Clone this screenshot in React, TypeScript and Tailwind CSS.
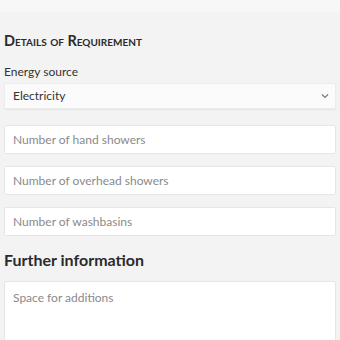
import React from "react";

// Numeric field list
const NumberFields = [
  "Number of hand showers",
  "Number of overhead showers",
  "Number of washbasins",
];

const inputClass =
  "block w-full h-[29px] px-2 bg-white border border-[#e6e6e6] rounded-[2px] text-[12px] text-[#333] placeholder:text-[#8a8a8a] outline-none";

const App = () => {
  return (
    <div className="w-[340px] h-[340px] overflow-hidden bg-[#f3f3f3] font-['Lato',sans-serif] text-[#333]">
      <div className="h-3 bg-[#f7f7f7]" />
      <div className="px-1 pt-[21px]">
        <h2 className="text-[14.5px] font-bold [font-variant:small-caps] leading-4 text-[#2b2b2b]">
          Details of Requirement
        </h2>
        <label className="block mt-[15px] text-[12px] leading-4 text-[#333]">
          Energy source
        </label>
        <div className="relative mt-[3px]">
          <select className="block w-full h-[26px] pl-2 pr-6 bg-[#fbfbfb] border border-[#ececec] rounded-[2px] shadow-[0_1px_1px_rgba(0,0,0,0.06)] text-[12px] text-[#333] appearance-none outline-none">
            <option>Electricity</option>
          </select>
          <svg
            className="absolute right-[7px] top-[10px] pointer-events-none"
            width="8"
            height="6"
            viewBox="0 0 8 6"
            fill="none"
          >
            <path d="M1 1.5L4 4.5L7 1.5" stroke="#777" strokeWidth="1.2" />
          </svg>
        </div>
        <div className="flex flex-col gap-[12px] mt-[16px]">
          {NumberFields.map((name, idx) => (
            <input key={idx} type="number" placeholder={name} className={inputClass} />
          ))}
        </div>
        <h3 className="mt-[14px] text-[16px] font-bold leading-5 text-[#2b2b2b]">
          Further information
        </h3>
        <div className="flex mt-[11px]">
          <textarea
            placeholder="Space for additions"
            className="block flex-1 h-[80px] px-2 py-[7px] bg-white border border-[#e6e6e6] rounded-[2px] text-[12px] placeholder:text-[#8a8a8a] outline-none resize-none"
          />
        </div>
      </div>
    </div>
  );
};

export default App;
